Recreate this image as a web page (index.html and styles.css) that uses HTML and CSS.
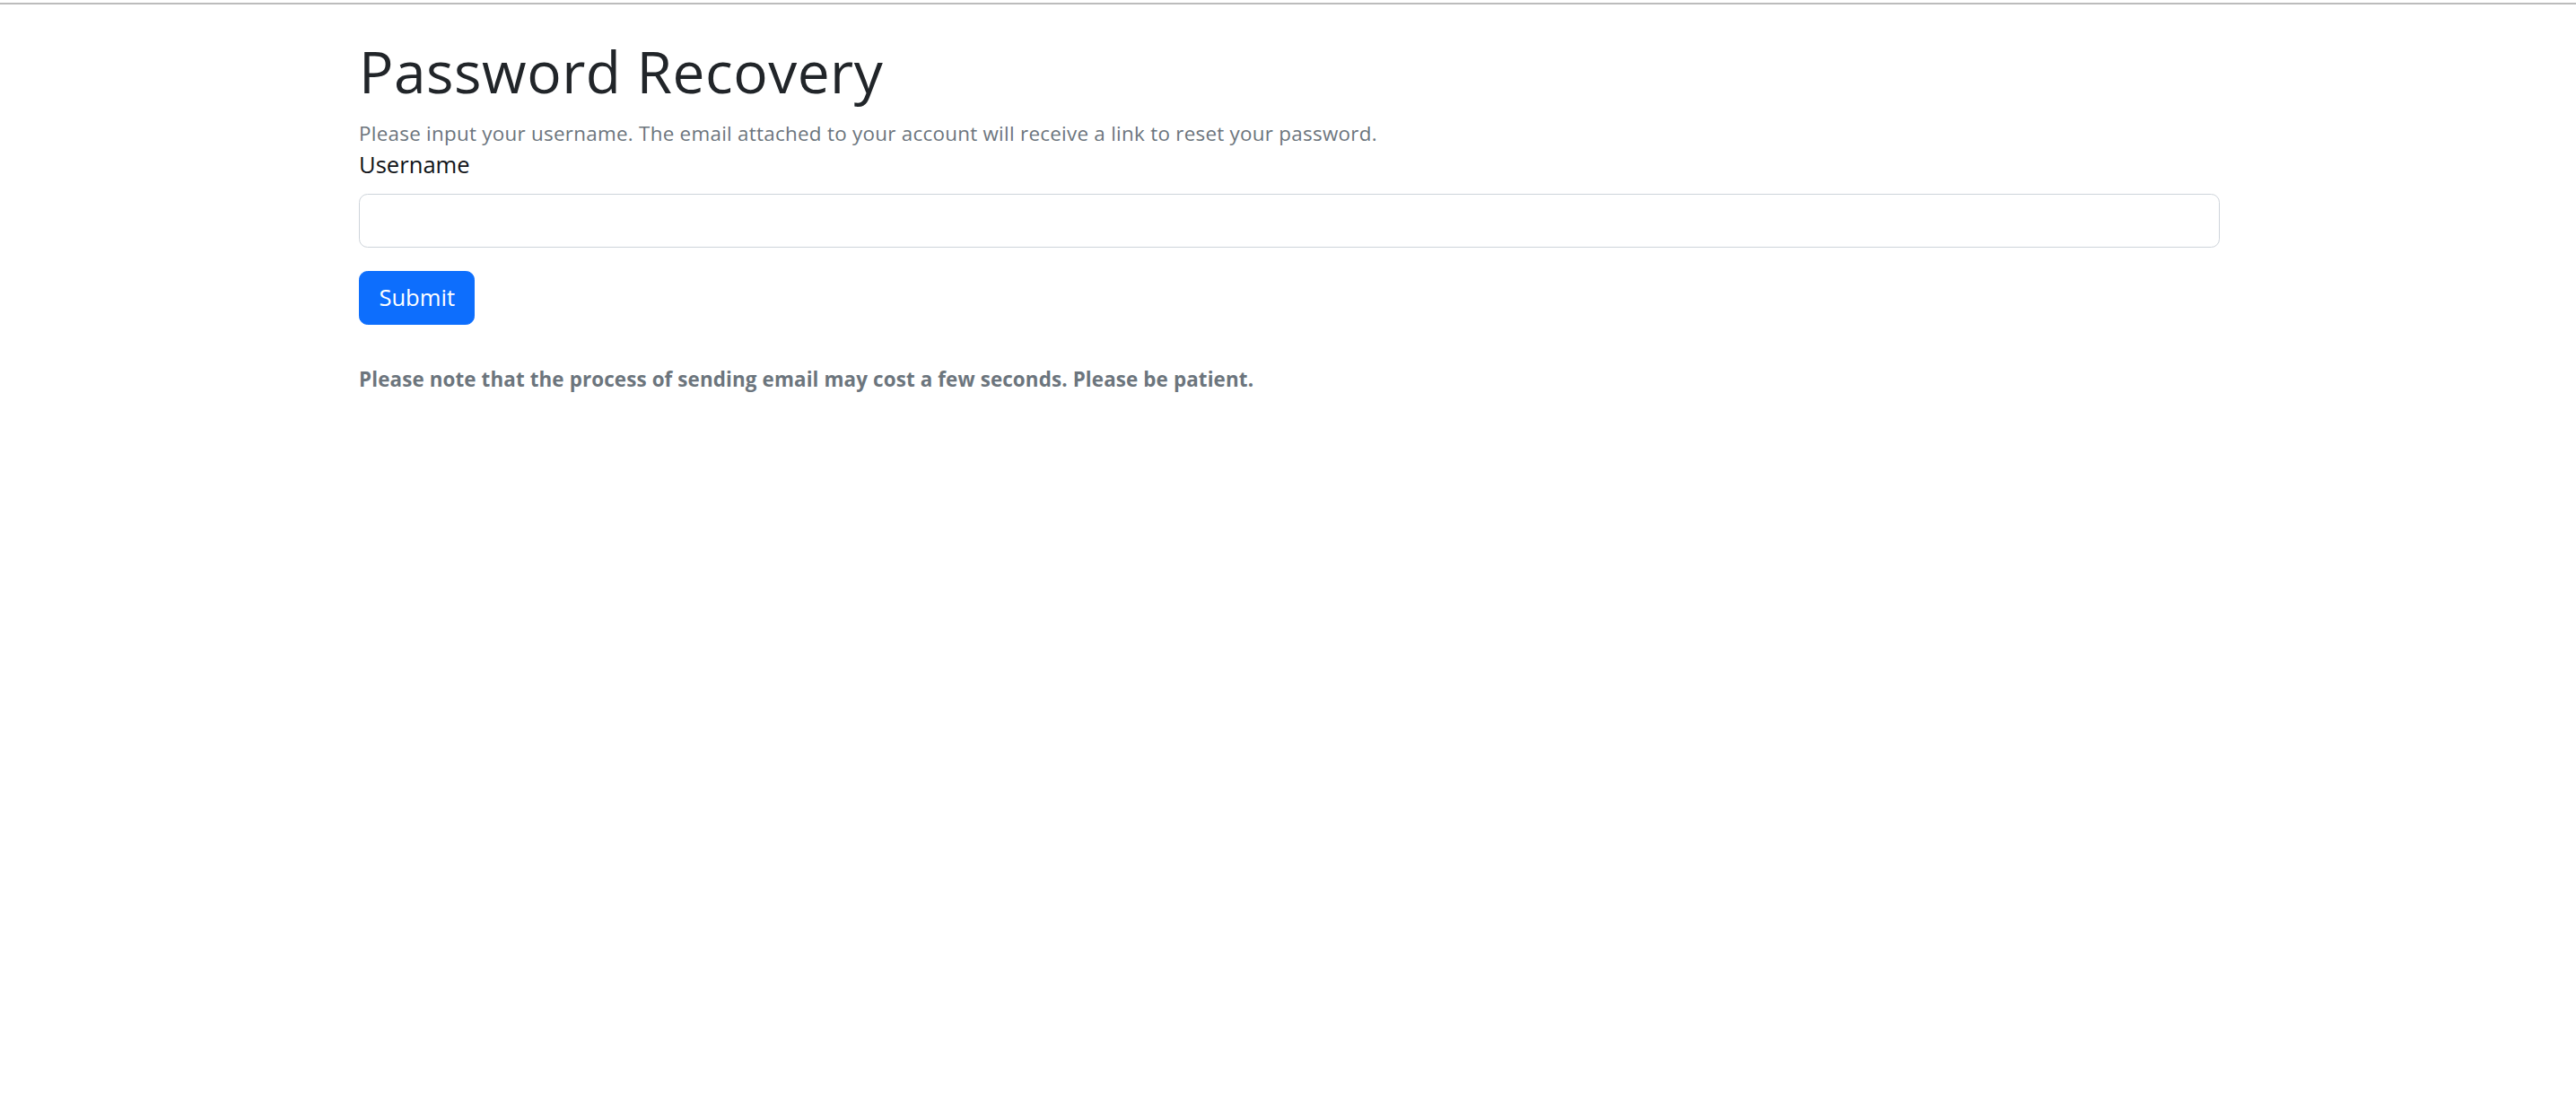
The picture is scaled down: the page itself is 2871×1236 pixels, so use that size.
FILE: index.html
```html
<!DOCTYPE html>
<html lang="en">
<head>
<meta charset="utf-8">
<title>Password Recovery</title>
<link rel="stylesheet" href="styles.css">
</head>
<body>
<div class="topline"></div>
<div class="page">
  <main class="container">
    <h1 class="title">Password Recovery</h1>
    <form class="recover-form" action="#" onsubmit="return false;">
      <div class="form-text">Please input your username. The email attached to your account will receive a link to reset your password.</div>
      <label class="form-label" for="username">Username</label>
      <input class="form-control" type="text" id="username" name="username">
      <button class="btn-primary" type="submit">Submit</button>
    </form>
    <p class="note">Please note that the process of sending email may cost a few seconds. Please be patient.</p>
  </main>
</div>
</body>
</html>
```
FILE: styles.css
```css
html, body {
  margin: 0;
  padding: 0;
  background: #ffffff;
}

body {
  font-family: "Open Sans", "Noto Sans", sans-serif;
  color: #212529;
}

.topline {
  margin-top: 3px;
  height: 2px;
  background: #bcbcbc;
}

.page {
  padding-left: 3px;
  padding-top: 37px;
}

.container {
  width: 2074px;
  margin: 0 auto;
  display: flex;
  flex-direction: column;
}

.title {
  margin: 0 0 12.8px 0;
  font-size: 64px;
  line-height: 76.8px;
  font-weight: 400;
  letter-spacing: 0.5px;
  color: #212529;
}

.recover-form {
  display: flex;
  flex-direction: column;
  align-items: flex-start;
}

.form-text {
  font-size: 22.4px;
  line-height: 33.6px;
  color: #6c757d;
  letter-spacing: 0.27px;
}

.form-label {
  font-size: 25.6px;
  line-height: 38.4px;
  color: #111418;
  margin-bottom: 12.6px;
}

.form-control {
  box-sizing: border-box;
  width: 100%;
  height: 60px;
  margin: 0 0 26px 0;
  padding: 9.6px 19.2px;
  border: 1.6px solid #ced4da;
  border-radius: 9.6px;
  background: #ffffff;
  font-family: inherit;
  font-size: 25.6px;
  color: #212529;
  outline: none;
}

.btn-primary {
  box-sizing: border-box;
  height: 60px;
  padding: 0 21.4px;
  border: 1.6px solid #0d6efd;
  border-radius: 9.6px;
  background: #0d6efd;
  color: #ffffff;
  font-family: inherit;
  font-size: 25.6px;
  line-height: 38.4px;
  cursor: pointer;
}

.note {
  margin: 43.5px 0 0 0;
  font-size: 22.4px;
  line-height: 33.6px;
  font-weight: 700;
  letter-spacing: 0.12px;
  color: #6c757d;
}
```
